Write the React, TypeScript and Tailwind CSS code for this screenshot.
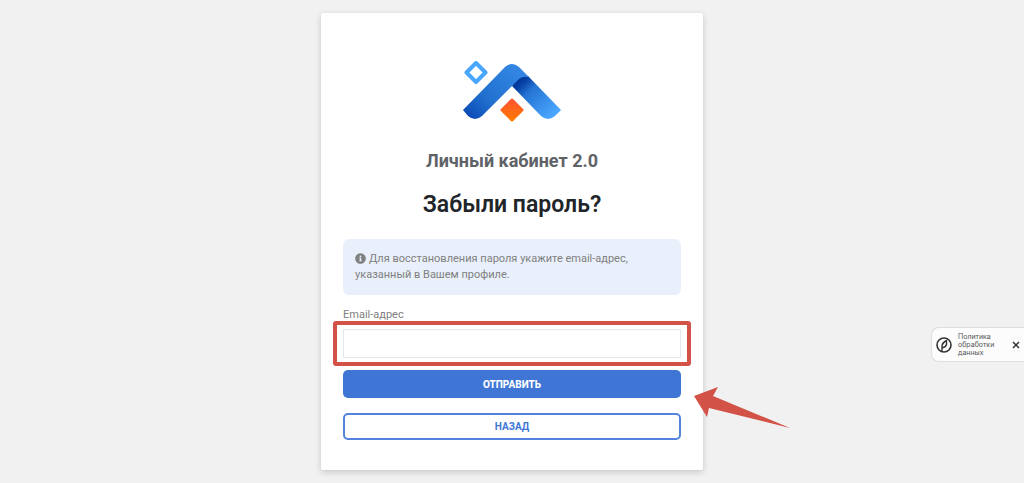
import { FaInfoCircle } from "react-icons/fa";

function Logo() {
  return (
    <svg viewBox="0 0 98 62" className="h-[62px] w-[98px]" role="img" aria-label="Логотип">
      <defs>
        <linearGradient id="left" gradientUnits="userSpaceOnUse" x1="4" y1="54" x2="50" y2="8">
          <stop offset="0" stopColor="#0c4bb5" />
          <stop offset="0.4" stopColor="#2170d0" />
          <stop offset="1" stopColor="#3285e2" />
        </linearGradient>
        <linearGradient id="right" gradientUnits="userSpaceOnUse" x1="55" y1="18" x2="90" y2="54">
          <stop offset="0" stopColor="#023596" />
          <stop offset="0.12" stopColor="#0640a4" />
          <stop offset="0.34" stopColor="#2474d4" />
          <stop offset="1" stopColor="#4aa7ff" />
        </linearGradient>
        <linearGradient id="gem" x1="0" y1="0" x2="0" y2="1">
          <stop offset="0" stopColor="#ff5430" />
          <stop offset="1" stopColor="#ff7b00" />
        </linearGradient>
      </defs>
      <path d="M49 25 54 14 65 15 98 49 92 55Q85 61 78 55Z" fill="url(#right)" />
      <path d="M0 49 42 6Q49 0 56 6L67 17Q61 14 56 18L19 55Q12 61 5 55Z" fill="url(#left)" />
      <path d="m13 2 9.500 9.500L13 21 3.500 11.500Z" fill="none" stroke="#4aa7ff" strokeWidth="4" strokeLinejoin="round" />
      <path d="m49 39 10 10-10 10-10-10Z" fill="url(#gem)" stroke="url(#gem)" strokeWidth="3" strokeLinejoin="round" />
    </svg>
  );
}

function PolicyNotice() {
  return (
    <aside className="fixed right-0 top-[327px] flex h-[35px] w-[93px] items-center rounded-l-lg border border-r-0 border-[#dedede] bg-[#fcfcfc] pl-1">
      <svg viewBox="0 0 16 16" className="size-4 shrink-0" fill="none" stroke="#333" strokeWidth="1.600" aria-hidden="true">
        <circle cx="8" cy="8" r="7" />
        <path d="M6 14V8.500Q6.500 5.500 10.500 3.500V7.500Q10 10 6 11" strokeWidth="1.400" strokeLinejoin="round" />
      </svg>
      <a href="#policy" className="ml-[6px] flex-1 font-[Inter,sans-serif] text-[7px] leading-[8px] text-[#555]">
        Политика обработки данных
      </a>
      <button type="button" aria-label="Закрыть" className="mr-1 flex size-2 items-center justify-center">
        <svg viewBox="0 0 8 8" className="size-2" stroke="#333" strokeWidth="1.500">
          <path d="m1 1 6 6M7 1 1 7" />
        </svg>
      </button>
    </aside>
  );
}

export default function App() {
  return (
    <div className="min-h-screen bg-[#f1f1f1] px-4 pt-[13px] font-[Roboto,sans-serif]">
      <main className="mx-auto flex w-full max-w-[382px] flex-col rounded-xs bg-white px-[22px] pt-12 pb-[30px] shadow-[0_2px_6px_rgba(0,0,0,0.18)]">
        <div className="flex justify-center">
          <Logo />
        </div>
        <p className="mt-[26px] text-center text-[18px] leading-6 font-bold text-[#5f6368]">Личный кабинет 2.0</p>
        <h1 className="mt-4 text-center text-[23px] leading-8 font-semibold text-[#212529]">Забыли пароль?</h1>
        <div className="mt-[18px] rounded-md bg-[#e9f0fb] p-3 text-[11px] leading-4 text-[#808080]">
          <FaInfoCircle className="mr-[3px] inline size-[11px] align-[-2px]" aria-hidden="true" />
          Для восстановления пароля укажите email-адрес, указанный в Вашем профиле.
        </div>
        <form className="mt-3 flex flex-col" onSubmit={(e) => e.preventDefault()}>
          <label htmlFor="email" className="text-[11px] leading-4 text-[#808080]">
            Email-адрес
          </label>
          <div className="relative mt-[6px]">
            <input
              id="email"
              type="email"
              className="block h-[29px] w-full border border-[#e4e6ea] bg-white px-3 text-[11px] text-[#212529] outline-none"
            />
            <div className="pointer-events-none absolute -inset-x-[10px] -inset-y-2 rounded-[3px] border-4 border-[#d25247]" />
          </div>
          <div className="relative mt-3">
            <button type="submit" className="block h-7 w-full rounded-[5px] bg-[#3f76d6] text-[10px] font-extrabold text-white">
              ОТПРАВИТЬ
            </button>
            <svg viewBox="0 0 97 42" className="pointer-events-none absolute top-4 left-full ml-3 h-[42px] w-[97px]" aria-hidden="true">
              <path d="M1 10 25 1 20 10 97 42 16 22 14 31Z" fill="#d25247" />
            </svg>
          </div>
          <button type="button" className="mt-[15px] h-[27px] rounded-[5px] border-2 border-[#5383dc] bg-white text-[10px] font-bold text-[#3f76d6]">
            НАЗАД
          </button>
        </form>
      </main>
      <PolicyNotice />
    </div>
  );
}
